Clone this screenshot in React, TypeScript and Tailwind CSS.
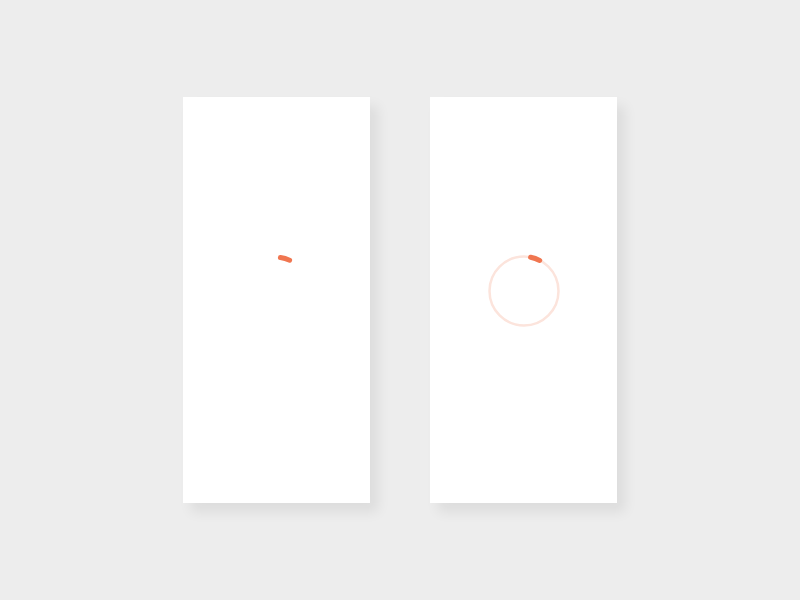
import React from 'react';

type SpinnerProps = {
  track?: boolean;
  arc: string;
};

// Progress ring: faint track plus a short orange head segment
function Spinner({ track, arc }: SpinnerProps) {
  return (
    <svg width="80" height="80" viewBox="0 0 80 80" className="mb-[18px]">
      {track && <circle cx="40" cy="40" r="34.5" fill="none" stroke="#fce4dc" strokeWidth="2.5" />}
      <path d={arc} fill="none" stroke="#f07650" strokeWidth="5" strokeLinecap="round" />
    </svg>
  );
}

function Card({ children }: { children: React.ReactNode }) {
  return (
    <div className="w-[187px] h-[406px] bg-white shadow-[8px_9px_12px_rgba(0,0,0,0.07)] flex items-center justify-center">
      {children}
    </div>
  );
}

export default function App() {
  return (
    <div className="w-full h-[600px] bg-[#ededed] flex items-center justify-center gap-[60px]">
      <Card>
        <Spinner arc="M43.4 6.6 A34.5 34.5 0 0 1 52.6 9.2" />
      </Card>
      <Card>
        <Spinner track arc="M46.6 6.3 A34.5 34.5 0 0 1 55.7 9.4" />
      </Card>
    </div>
  );
}
